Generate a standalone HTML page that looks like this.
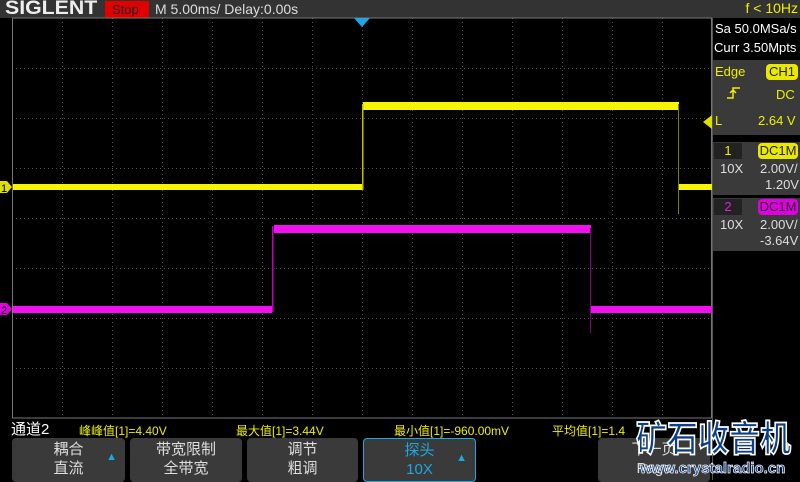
<!DOCTYPE html>
<html><head><meta charset="utf-8"><style>
*{margin:0;padding:0;box-sizing:border-box}
body{width:800px;height:480px;background:#000;position:relative;overflow:hidden;font-family:"Liberation Sans","Noto Sans CJK SC",sans-serif}
.a{position:absolute;white-space:nowrap}
.btn{position:absolute;top:438px;height:44px;background:#3a3a3a;border-radius:4px;color:#ddd;font-size:15px;text-align:center;line-height:19px;padding-top:2px}
.y{color:#f0f000}
</style></head><body>
<div class="a" style="left:0;top:0;width:712px;height:18px;background:#333"></div>
<div class="a" style="left:5px;top:-2px;font-size:19px;font-weight:bold;color:#eee;transform:scaleX(1.12);transform-origin:left">SIGLENT</div>
<div class="a" style="left:105px;top:1px;width:44px;height:17px;background:#e00000;color:#222;font-size:13px;line-height:17px;padding-left:7px">Stop</div>
<div class="a" style="left:155px;top:1px;color:#ddd;font-size:14px">M 5.00ms/ Delay:0.00s</div>
<svg class="a" style="left:0;top:0" width="800" height="480">
<g stroke="#555" stroke-width="1" stroke-dasharray="1,3">
<line x1="62.5" y1="18" x2="62.5" y2="418"/><line x1="112.5" y1="18" x2="112.5" y2="418"/><line x1="162.5" y1="18" x2="162.5" y2="418"/><line x1="212.5" y1="18" x2="212.5" y2="418"/><line x1="262.5" y1="18" x2="262.5" y2="418"/><line x1="312.5" y1="18" x2="312.5" y2="418"/><line x1="362.5" y1="18" x2="362.5" y2="418"/><line x1="412.5" y1="18" x2="412.5" y2="418"/><line x1="462.5" y1="18" x2="462.5" y2="418"/><line x1="512.5" y1="18" x2="512.5" y2="418"/><line x1="562.5" y1="18" x2="562.5" y2="418"/><line x1="612.5" y1="18" x2="612.5" y2="418"/><line x1="662.5" y1="18" x2="662.5" y2="418"/>
<line x1="12" y1="68.5" x2="712" y2="68.5"/><line x1="12" y1="118.5" x2="712" y2="118.5"/><line x1="12" y1="168.5" x2="712" y2="168.5"/><line x1="12" y1="218.5" x2="712" y2="218.5"/><line x1="12" y1="268.5" x2="712" y2="268.5"/><line x1="12" y1="318.5" x2="712" y2="318.5"/><line x1="12" y1="368.5" x2="712" y2="368.5"/>
</g>
<rect x="12.5" y="18" width="699" height="400" fill="none" stroke="#777"/>
<polygon points="354,18 370,18 362,27" fill="#1ca8e0"/>
<rect x="13" y="184" width="349" height="6" fill="#f5f500"/>
<rect x="363" y="102" width="316" height="8" fill="#f5f500"/>
<rect x="362" y="104" width="1.5" height="86" fill="#c0c000"/>
<rect x="678" y="104" width="1" height="110" fill="#808000"/>
<rect x="679" y="184" width="33" height="6" fill="#f5f500"/>
<rect x="13" y="306" width="259" height="7" fill="#f010f0"/>
<rect x="272" y="226" width="1.5" height="86" fill="#c000c0"/>
<rect x="274" y="225" width="317" height="8" fill="#f010f0"/>
<rect x="590" y="228" width="1" height="105" fill="#800080"/>
<rect x="591" y="306" width="121" height="7" fill="#f010f0"/>
<polygon points="0,181 7,181 12,187 7,193 0,193" fill="#e0e000"/>
<text x="1" y="192" font-size="11" fill="#000" font-family="Liberation Sans">1</text>
<polygon points="0,303 7,303 12,309 7,315 0,315" fill="#e000e0"/>
<text x="1" y="314" font-size="11" fill="#000" font-family="Liberation Sans">2</text>
<polygon points="703,122 712,115 712,129" fill="#e0e000"/>
</svg>
<div class="a" style="left:712px;top:0;width:88px;height:480px;background:#000;border-left:1px solid #555"></div>
<div class="a" style="left:712px;top:0;width:88px;height:18px;background:#333;color:#f0f000;font-size:14px;text-align:right;padding-right:2px">f &lt; 10Hz</div>
<div class="a" style="left:715px;top:21px;color:#fff;font-size:13px">Sa 50.0MSa/s</div>
<div class="a" style="left:714px;top:40px;color:#fff;font-size:13px">Curr 3.50Mpts</div>
<div class="a" style="left:713px;top:60px;width:87px;height:75px;background:#3a3a3a"></div>
<div class="a y" style="left:715px;top:64px;font-size:13px">Edge</div>
<div class="a" style="left:766px;top:64px;width:32px;height:16px;background:#e8e800;border-radius:4px;color:#222;font-size:13px;text-align:center;line-height:16px">CH1</div>
<svg class="a" style="left:726px;top:86px" width="16" height="14"><path d="M1 12H7V2H14M4 7L7 4L10 7" stroke="#f0f000" fill="none" stroke-width="1.5"/></svg>
<div class="a y" style="left:776px;top:87px;font-size:13px">DC</div>
<div class="a y" style="left:715px;top:113px;font-size:13px">L</div>
<div class="a y" style="left:758px;top:113px;font-size:13px">2.64 V</div>
<div class="a" style="left:713px;top:142px;width:87px;height:53px;background:#3a3a3a"></div>
<div class="a" style="left:714px;top:143px;width:28px;height:16px;background:#222;color:#f0f000;font-size:13px;text-align:center">1</div>
<div class="a" style="left:758px;top:143px;width:40px;height:16px;background:#e8e800;border-radius:4px;color:#222;font-size:13px;text-align:center;line-height:16px">DC1M</div>
<div class="a" style="left:720px;top:161px;color:#ddd;font-size:13px">10X</div>
<div class="a" style="left:760px;top:161px;color:#ddd;font-size:13px">2.00V/</div>
<div class="a" style="left:765px;top:177px;color:#ddd;font-size:13px">1.20V</div>
<div class="a" style="left:713px;top:198px;width:87px;height:53px;background:#3a3a3a"></div>
<div class="a" style="left:714px;top:199px;width:28px;height:16px;background:#222;color:#e020e0;font-size:13px;text-align:center">2</div>
<div class="a" style="left:758px;top:199px;width:40px;height:16px;background:#e000e0;border-radius:4px;color:#222;font-size:13px;text-align:center;line-height:16px">DC1M</div>
<div class="a" style="left:720px;top:217px;color:#ddd;font-size:13px">10X</div>
<div class="a" style="left:760px;top:217px;color:#ddd;font-size:13px">2.00V/</div>
<div class="a" style="left:760px;top:233px;color:#ddd;font-size:13px">-3.64V</div>
<div class="a" style="left:11px;top:418px;color:#fff;font-size:15px">通道2</div>
<div class="a y" style="left:79px;top:422px;font-size:12px">峰峰值[1]=4.40V</div>
<div class="a y" style="left:236px;top:422px;font-size:12px">最大值[1]=3.44V</div>
<div class="a y" style="left:394px;top:422px;font-size:12px">最小值[1]=-960.00mV</div>
<div class="a y" style="left:552px;top:422px;font-size:12px">平均值[1]=1.4</div>
<div class="btn" style="left:12px;width:113px">耦合<br>直流<span class="a" style="right:8px;top:10px;color:#1ca8e0;font-size:11px">▲</span></div>
<div class="btn" style="left:130px;width:112px">带宽限制<br>全带宽</div>
<div class="btn" style="left:247px;width:111px">调节<br>粗调</div>
<div class="btn" style="left:363px;width:113px;border:1px solid #1ca8e0;color:#1ca8e0">探头<br>10X<span class="a" style="right:8px;top:10px;font-size:11px">▲</span></div>
<div class="btn" style="left:598px;width:112px">下一页<br>Page</div>
<div class="a" style="left:636px;top:414px;font-size:31px;font-weight:bold;color:#0a3d8a;-webkit-text-stroke:1.5px #fff;line-height:44px;transform:scaleY(1.15);transform-origin:top left">矿石收音机</div>
<div class="a" style="left:640px;top:460px;font-size:15px;font-weight:bold;color:#0a3d8a;-webkit-text-stroke:0.7px #fff;line-height:18px">www.crystalradio.cn</div>
</body></html>
